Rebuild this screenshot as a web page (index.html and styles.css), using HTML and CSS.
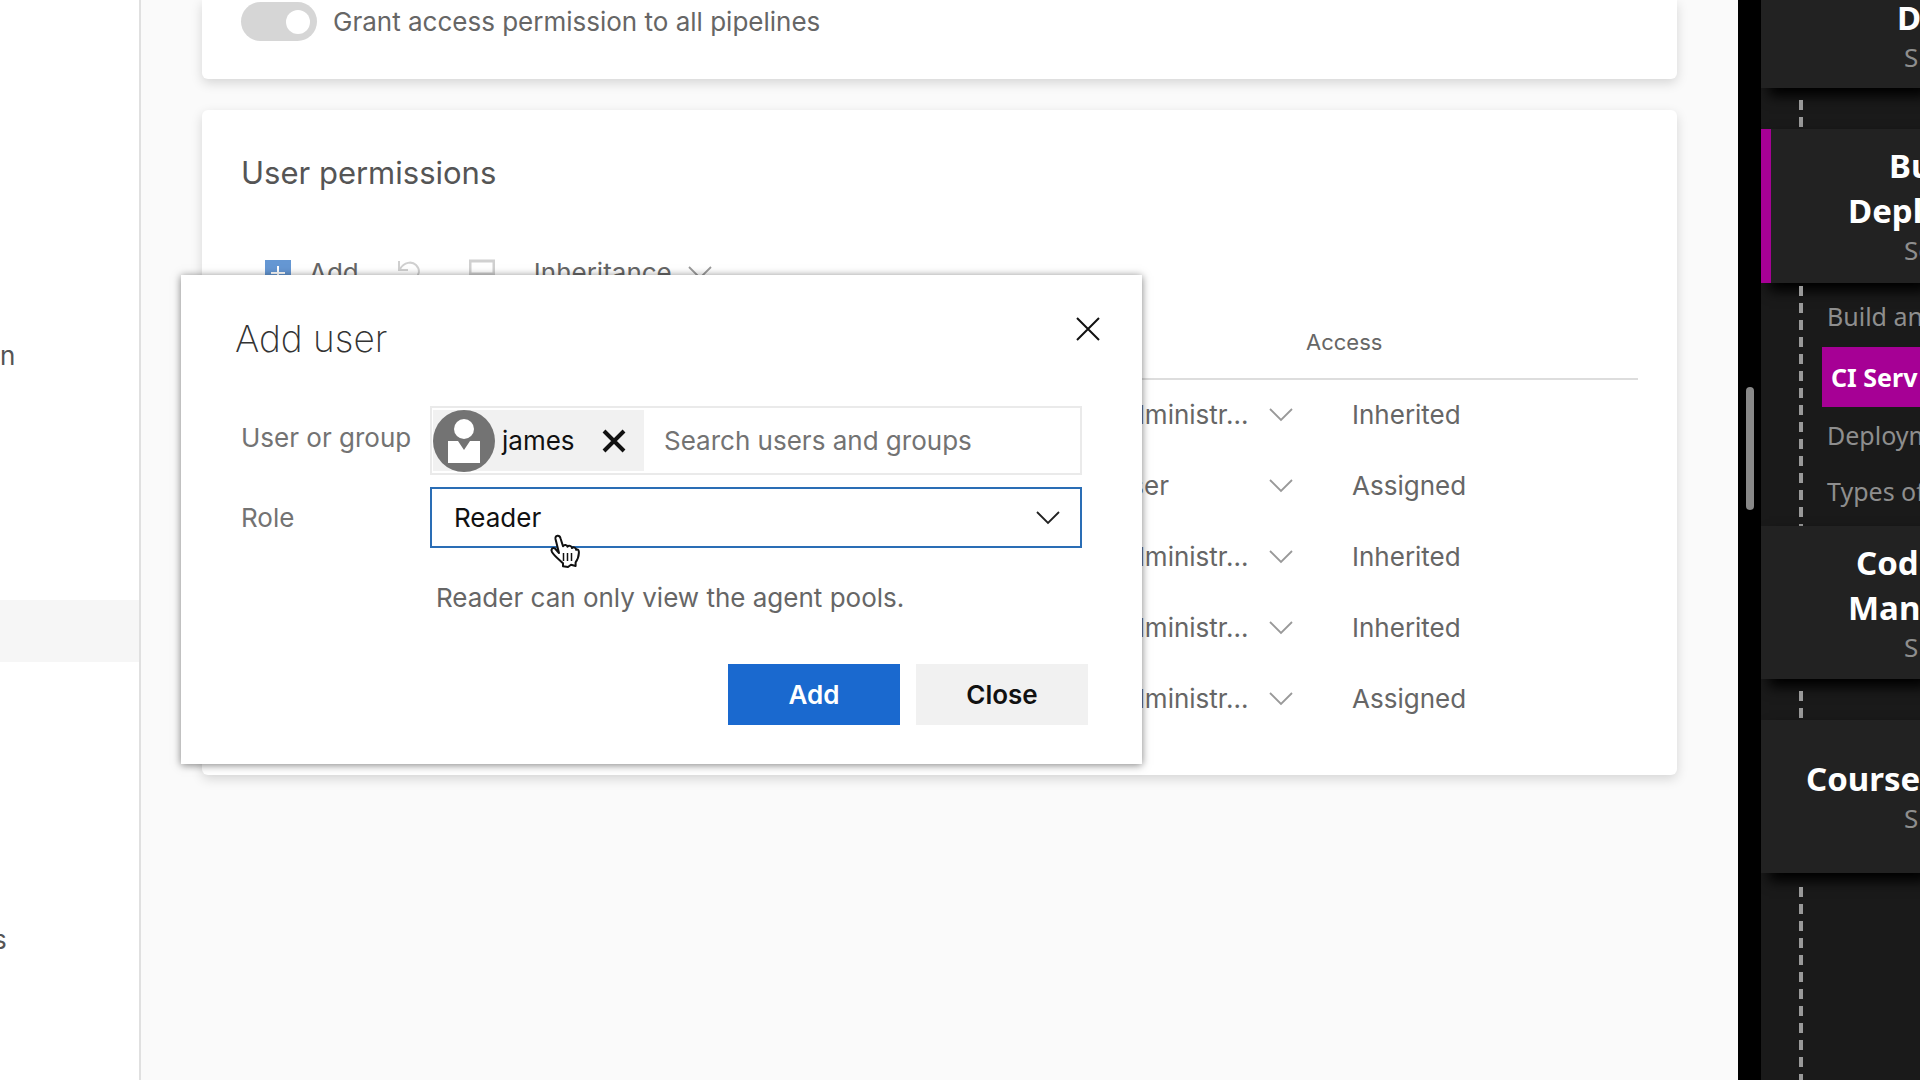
FILE: index.html
```html
<!DOCTYPE html>
<html lang="en">
<head>
<meta charset="utf-8">
<title>User permissions</title>
<link rel="stylesheet" href="styles.css">
</head>
<body>
<svg class="sprite" aria-hidden="true">
  <symbol id="chevron" viewBox="0 0 24 14"><path d="M1 1l11 11L23 1" fill="none" stroke="currentColor" stroke-width="1.8"/></symbol>
</svg>
<div class="app">
  <nav class="side" aria-label="Project settings">
    <a class="side-link" href="#">n</a>
    <a class="side-link side-link-active" href="#" aria-label="Selected"></a>
    <a class="side-link side-link-last" href="#">s</a>
  </nav>

  <main class="main">
    <section class="card card-access">
      <label class="toggle-row"><input class="toggle" type="checkbox" checked>Grant access permission to all pipelines</label>
    </section>

    <section class="card card-users">
      <h2 class="card-title">User permissions</h2>
      <div class="toolbar">
        <button class="tool tool-add" type="button">
          <svg width="26" height="26" viewBox="0 0 26 26"><path d="M0 0h26v26H0z" fill="#6597d3"/><path d="M13 6v14M6 13h14" stroke="#fff" stroke-width="2"/></svg>
          Add
        </button>
        <button class="tool tool-faint" type="button" aria-label="Undo">
          <svg width="26" height="28" viewBox="0 0 26 28"><path d="M2 2v9h9M3 10c4-7 12-8 16-4 5 5 3 10-1 14l-7 7" fill="none" stroke="currentColor" stroke-width="2"/></svg>
        </button>
        <button class="tool tool-faint tool-save" type="button" aria-label="Save">
          <svg width="26" height="28" viewBox="0 0 26 28"><path d="M1 2h24v24H1zM1 15h24" fill="none" stroke="currentColor" stroke-width="3"/></svg>
        </button>
        <button class="tool tool-menu" type="button">Inheritance
          <svg class="chev" width="24" height="14"><use href="#chevron"/></svg>
        </button>
      </div>
      <table class="grid">
        <colgroup><col><col class="col-role"><col class="col-access"></colgroup>
        <thead><tr><th></th><th></th><th scope="col">Access</th></tr></thead>
        <tbody>
          <tr><td></td><td><button class="role" type="button">Administr...<svg class="chev" width="24" height="14"><use href="#chevron"/></svg></button></td><td class="access">Inherited</td></tr>
          <tr><td></td><td><button class="role" type="button">User<svg class="chev" width="24" height="14"><use href="#chevron"/></svg></button></td><td class="access">Assigned</td></tr>
          <tr><td></td><td><button class="role" type="button">Administr...<svg class="chev" width="24" height="14"><use href="#chevron"/></svg></button></td><td class="access">Inherited</td></tr>
          <tr><td></td><td><button class="role" type="button">Administr...<svg class="chev" width="24" height="14"><use href="#chevron"/></svg></button></td><td class="access">Inherited</td></tr>
          <tr><td></td><td><button class="role" type="button">Administr...<svg class="chev" width="24" height="14"><use href="#chevron"/></svg></button></td><td class="access">Assigned</td></tr>
        </tbody>
      </table>
    </section>

    <div class="dialog" role="dialog" aria-labelledby="dialog-title">
      <header class="dialog-head">
        <h2 class="dialog-title" id="dialog-title">Add user</h2>
        <button class="icon-button" type="button" aria-label="Close dialog">
          <svg width="28" height="28" viewBox="0 0 28 28"><path d="M3 3l22 22M25 3L3 25" stroke="#111" stroke-width="2"/></svg>
        </button>
      </header>
      <form class="form">
        <label class="label label-people" for="people">User or group</label>
        <div class="people">
          <span class="chip">
            <svg width="62" height="62" viewBox="0 0 62 62"><circle cx="31" cy="31" r="31" fill="#737373"/><circle cx="31" cy="19" r="10" fill="#fff"/><path d="M15 31h10l6 9 6-9h10v22H15z" fill="#fff"/></svg>
            james
            <button class="icon-button chip-remove" type="button" aria-label="Remove james">
              <svg width="24" height="24" viewBox="0 0 24 24"><path d="M2 2l20 20M22 2L2 22" stroke="#111" stroke-width="4"/></svg>
            </button>
          </span>
          <input class="people-input" id="people" type="text" placeholder="Search users and groups">
        </div>
        <label class="label" for="role">Role</label>
        <div class="select-wrap">
          <select class="select" id="role"><option>Reader</option></select>
          <svg class="select-chev" width="24" height="14"><use href="#chevron"/></svg>
        </div>
        <p class="help">Reader can only view the agent pools.</p>
      </form>
      <footer class="actions">
        <button class="btn btn-primary" type="button">Add</button>
        <button class="btn" type="button">Close</button>
      </footer>
      <svg class="pointer" width="32" height="36" viewBox="0 0 32 36" aria-hidden="true"><path d="M10 19 6.500 5c-.7-4 4-4.500 5-.8l2.500 8c1-2 4-1.600 4.500.6 1.200-1.800 4.200-1 4.500 1.200 1.600-1.400 4-.4 4.200 1.800 2-.8 2.800.7 2.700 3-.2 5-1.400 7-3.300 9.500V32l-4.600-1.200L19 33l-5-.8v-3C11 26 6 23 3 18c-1.500-3 .8-5 3-3.500z" fill="#fff" stroke="#111" stroke-width="2" stroke-linejoin="round"/><path d="M14.500 19v8M18.500 19v8M22.500 19v8" stroke="#111" stroke-width="1.500"/></svg>
    </div>
  </main>

  <div class="divider"><span class="grip"></span></div>

  <aside class="course">
    <section class="module module-first"><h3 class="name indent-d">D</h3><p class="sub">S</p></section>
    <div class="rail"></div>
    <section class="module module-current"><h3 class="name indent-b">Bu</h3><h3 class="name indent-p">Depl</h3><p class="sub">Se</p></section>
    <ul class="rail lessons">
      <li><a class="lesson" href="#">Build an</a></li>
      <li><a class="lesson lesson-current" href="#">CI Serv</a></li>
      <li><a class="lesson" href="#">Deploym</a></li>
      <li><a class="lesson" href="#">Types of</a></li>
    </ul>
    <section class="module"><h3 class="name indent-c">Cod</h3><h3 class="name indent-p">Man</h3><p class="sub">S</p></section>
    <div class="rail"></div>
    <section class="module module-single"><h3 class="name indent-o">Course</h3><p class="sub">S</p></section>
    <div class="rail rail-rest"></div>
  </aside>
</div>
</body>
</html>
```
FILE: styles.css
```css
* { box-sizing: border-box; }

body {
  margin: 0;
  font: 26px/32px Inter, "Liberation Sans", sans-serif;
  color: #666;
  background: #fafafa;
}

h2, h3, p, ul { margin: 0; padding: 0; font-weight: 400; }
ul { list-style: none; }
a { color: inherit; text-decoration: none; }
svg { display: block; flex: none; }
button, input, select { font: inherit; color: inherit; margin: 0; }
button { padding: 0; border: 0; background: none; }

.sprite { display: none; }

.app {
  display: flex;
  min-height: 100vh;
  overflow: hidden;
}

/* Settings navigation */
.side {
  flex: none;
  width: 141px;
  padding-top: 340px;
  background: #fff;
  border-right: 2px solid #e0e0e0;
  overflow: hidden;
  color: #555;
}
.side-link { display: block; height: 32px; }
.side-link-active { height: 62px; margin-top: 228px; background: #f6f6f6; }
.side-link-last { margin-top: 262px; text-indent: -7px; }

/* Pool settings */
.main {
  position: relative;
  flex: 1;
  min-width: 0;
  padding: 0 61px;
}
.card {
  background: #fff;
  border-radius: 6px;
  box-shadow: 0 4px 12px rgba(0, 0, 0, .15);
}
.card-access {
  padding: 2px 39px 38px;
  border-radius: 0 0 6px 6px;
}
.toggle-row { display: flex; align-items: center; gap: 16px; }
.toggle {
  appearance: none;
  display: flex;
  justify-content: flex-end;
  align-items: center;
  width: 76px;
  height: 39px;
  padding: 0 7px;
  border-radius: 20px;
  background: #d6d6d6;
}
.toggle::before {
  content: "";
  width: 24px;
  height: 24px;
  border-radius: 50%;
  background: #fff;
}
.card-users { margin-top: 31px; padding: 43px 39px 41px; }
.card-title { font-size: 31px; line-height: 40px; color: #555; }

.toolbar {
  display: flex;
  align-items: center;
  height: 40px;
  margin-top: 60px;
  padding-left: 24px;
}
.tool { display: flex; align-items: center; gap: 18px; }
.tool-faint { margin-left: 38px; color: #d0d0d0; }
.tool-save { margin-left: 46px; }
.tool-menu { gap: 16px; margin-left: 39px; }
.chev { color: #999; }

.grid {
  width: 100%;
  margin-top: 12px;
  border-collapse: collapse;
  table-layout: fixed;
}
.col-role { width: 195px; }
.col-access { width: 332px; }
.grid th {
  height: 74px;
  padding: 0;
  border-bottom: 2px solid #ddd;
  font-size: 22px;
  font-weight: 400;
  text-align: left;
}
.grid td { height: 71px; padding: 0; }
.grid .access { padding-left: 46px; }
.role {
  display: flex;
  align-items: center;
  justify-content: space-between;
  width: 182px;
}

/* Add user dialog */
.dialog {
  position: absolute;
  top: 275px;
  left: 40px;
  width: 961px;
  background: #fff;
  box-shadow: 0 1px 8px rgba(0, 0, 0, .5);
}
.dialog-head {
  display: flex;
  justify-content: space-between;
  align-items: flex-start;
  padding: 40px 40px 0 54px;
}
.dialog-title { font-size: 37px; line-height: 48px; font-weight: 200; color: #333; }
.icon-button { display: flex; }
.form {
  display: grid;
  grid-template-columns: 189px minmax(0, 1fr);
  row-gap: 12px;
  align-items: center;
  padding: 43px 60px 0;
}
.people {
  display: flex;
  height: 69px;
  padding: 2px 1px;
  border: 2px solid #eaeaea;
}
.chip {
  display: flex;
  align-items: center;
  width: 211px;
  gap: 7px;
  padding-right: 18px;
  background: #f1f1f1;
  color: #111;
}
.chip-remove { margin-left: auto; }
.people-input {
  flex: 1;
  min-width: 0;
  padding: 0 20px;
  border: 0;
  outline: 0;
  background: none;
}
.people-input::placeholder { color: #737373; opacity: 1; }
.label { color: #737373; }
.label-people { padding-bottom: 6px; }
.select-wrap { position: relative; }
.select {
  appearance: none;
  display: block;
  width: 100%;
  height: 61px;
  padding: 0 22px;
  border: 2px solid #2a6db5;
  border-radius: 0;
  background: #fff;
  color: #111;
}
.select-chev {
  position: absolute;
  top: 24px;
  right: 22px;
  color: #222;
  pointer-events: none;
}
.help { grid-column: 2; margin-top: 22px; padding-left: 6px; }
.actions {
  display: flex;
  justify-content: flex-end;
  gap: 16px;
  padding: 50px 54px 39px;
}
.btn {
  width: 172px;
  height: 61px;
  background: #f1f1f1;
  color: #111;
  font-weight: 600;
}
.btn-primary { background: #1a69cf; color: #fff; }
.pointer { position: absolute; top: 259px; left: 368px; }

/* Split bar */
.divider { flex: none; width: 23px; padding: 387px 8px 0; background: #000; }
.grip { display: block; width: 8px; height: 123px; border-radius: 4px; background: #888; }

/* Course outline */
.course {
  flex: none;
  display: flex;
  flex-direction: column;
  width: 159px;
  overflow: hidden;
  background: #1a1a1a;
  color: #8e8e8e;
  font-family: "Noto Sans", sans-serif;
  white-space: nowrap;
}
.module {
  flex: none;
  height: 153px;
  padding-top: 14px;
  background: #222;
  box-shadow: 8px 8px 12px #000;
}
.module-first {
  display: flex;
  flex-direction: column;
  justify-content: flex-end;
  height: 88px;
  padding: 0 0 14px;
}
.module-current { height: 154px; box-shadow: inset 10px 0 #a60095, 8px 8px 12px #000; }
.module-single { padding-top: 36px; }
.name { color: #fff; font-size: 33px; line-height: 45px; font-weight: 700; }
.sub { padding-left: 143px; font-size: 26px; line-height: 34px; }
.indent-d { padding-left: 136px; }
.indent-b { padding-left: 128px; }
.indent-p { padding-left: 87px; }
.indent-c { padding-left: 95px; }
.indent-o { padding-left: 45px; }

.rail {
  flex: none;
  height: 41px;
  background: repeating-linear-gradient(#999 0 10px, transparent 10px 17px) 38px 12px / 4px 100% no-repeat;
}
.lessons { height: 243px; padding: 5px 0 0 61px; background-position: 38px 3px; }
.rail-rest { flex: 1; background-position: 38px 14px; }
.lesson { display: block; padding-left: 5px; font-size: 25px; line-height: 56px; }
.lesson-current {
  margin-top: 3px;
  padding-left: 9px;
  line-height: 60px;
  background: #a60095;
  color: #fff;
  font-weight: 700;
}
```
